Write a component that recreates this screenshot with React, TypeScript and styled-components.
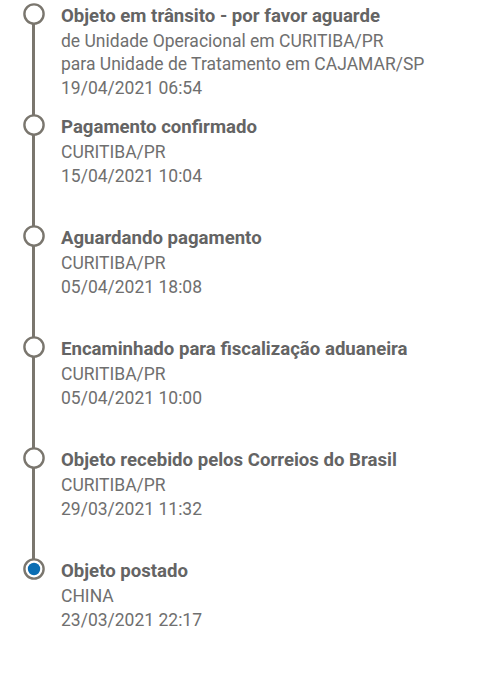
import React from 'react';
import styled, { createGlobalStyle } from 'styled-components';

type TrackEvent = {
  title: string;
  place: string[];
  date: string;
};

const events: TrackEvent[] = [
  {
    title: 'Objeto em trânsito - por favor aguarde',
    place: ['de Unidade Operacional em CURITIBA/PR', 'para Unidade de Tratamento em CAJAMAR/SP'],
    date: '19/04/2021 06:54',
  },
  { title: 'Pagamento confirmado', place: ['CURITIBA/PR'], date: '15/04/2021 10:04' },
  { title: 'Aguardando pagamento', place: ['CURITIBA/PR'], date: '05/04/2021 18:08' },
  { title: 'Encaminhado para fiscalização aduaneira', place: ['CURITIBA/PR'], date: '05/04/2021 10:00' },
  { title: 'Objeto recebido pelos Correios do Brasil', place: ['CURITIBA/PR'], date: '29/03/2021 11:32' },
  { title: 'Objeto postado', place: ['CHINA'], date: '23/03/2021 22:17' },
];

export default function App() {
  return (
    <>
      <GlobalStyle />
      <Timeline>
        {events.map((ev, i) => {
          const first = i === 0;
          const last = i === events.length - 1;
          return (
            <Item key={i}>
              <Marker>
                <Segment $hidden={first} $fixed />
                <Dot active={last} />
                <Segment $hidden={last} />
              </Marker>
              <Content>
                <Title>{ev.title}</Title>
                <Place>
                  {ev.place.map((p, j) => (
                    <div key={j}>{p}</div>
                  ))}
                </Place>
                <DateText>{ev.date}</DateText>
              </Content>
            </Item>
          );
        })}
      </Timeline>
    </>
  );
}

function Dot({ active }: { active?: boolean }) {
  return (
    <DotSvg width="22" height="22" viewBox="0 0 22 22">
      <circle cx="11" cy="11" r="9.6" fill="#fff" stroke="#7a766e" strokeWidth="2.4" />
      {active && <circle cx="11" cy="11" r="6.2" fill="#0a6db3" />}
    </DotSvg>
  );
}

const GlobalStyle = createGlobalStyle`
  html, body {
    margin: 0;
    padding: 0;
    background: #ffffff;
  }
  body {
    font-family: Roboto, "Noto Sans", Arial, sans-serif;
  }
`;

const Timeline = styled.div`
  width: 500px;
  min-height: 674px;
  background: #ffffff;
  display: flex;
  flex-direction: column;
`;

const Item = styled.div`
  display: flex;
  min-height: 111px;
`;

const Marker = styled.div`
  width: 55px;
  margin-left: 6px;
  flex-shrink: 0;
  display: flex;
  flex-direction: column;
  align-items: center;
`;

const Segment = styled.div<{ $hidden?: boolean; $fixed?: boolean }>`
  width: 2.4px;
  background: ${(p) => (p.$hidden ? 'transparent' : '#7a766e')};
  ${(p) => (p.$fixed ? 'height: 4px;' : 'flex: 1;')}
  margin: ${(p) => (p.$fixed ? '0 0 -1px' : '-1px 0 0')};
`;

const DotSvg = styled.svg`
  display: block;
  flex-shrink: 0;
  position: relative;
`;

const Content = styled.div`
  padding-top: 4px;
  display: flex;
  flex-direction: column;
  color: #6f6f6f;
`;

const Title = styled.div`
  font-size: 18.6px;
  font-weight: 700;
  line-height: 25px;
  color: #646464;
`;

const Place = styled.div`
  font-size: 17.5px;
  line-height: 22.5px;
  margin-top: 1px;
`;

const DateText = styled.div`
  font-size: 17.5px;
  line-height: 23px;
  margin-top: 1.5px;
`;
